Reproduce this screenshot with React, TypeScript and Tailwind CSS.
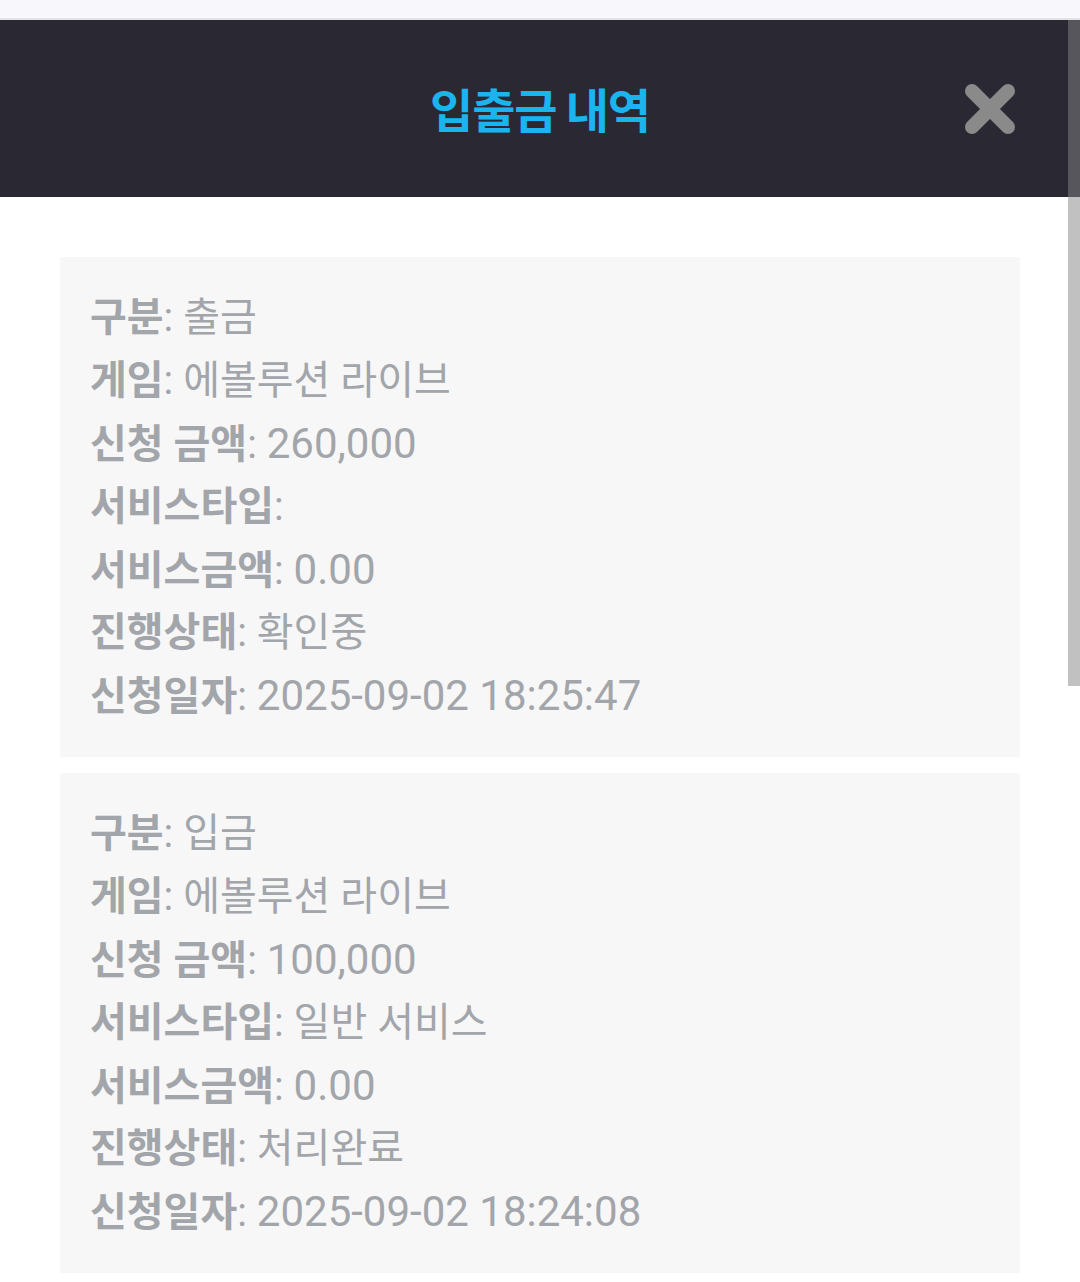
const records = [
  [
    ["구분", "출금"],
    ["게임", "에볼루션 라이브"],
    ["신청 금액", "260,000"],
    ["서비스타입", ""],
    ["서비스금액", "0.00"],
    ["진행상태", "확인중"],
    ["신청일자", "2025-09-02 18:25:47"],
  ],
  [
    ["구분", "입금"],
    ["게임", "에볼루션 라이브"],
    ["신청 금액", "100,000"],
    ["서비스타입", "일반 서비스"],
    ["서비스금액", "0.00"],
    ["진행상태", "처리완료"],
    ["신청일자", "2025-09-02 18:24:08"],
  ],
];

const isNumeric = (v: string) => /^[0-9.,:\- ]+$/.test(v);

const App = () => {
  return (
    <div
      className="relative h-[1282px] w-[1080px] overflow-hidden bg-white"
      style={{ fontFamily: 'Roboto, "Noto Sans CJK KR", sans-serif' }}
    >
      <div className="h-[20px] border-b-2 border-[#e2e2e8] bg-[#f8f8fc]" />
      <div className="grid h-[177px] grid-cols-[1fr_auto_1fr] items-center bg-[#2a2933]">
        <div />
        <h2
          className="text-[47px] font-bold tracking-tight text-[#1ab4ee]"
          style={{ fontFamily: '"Noto Sans CJK KR", sans-serif' }}
        >
          입출금 내역
        </h2>
        <div className="flex justify-end pr-[64px]">
          <button className="flex h-[52px] w-[52px] items-center justify-center">
            <svg width="52" height="52" viewBox="0 0 52 52">
              <path
                d="M8 8 L44 44 M44 8 L8 44"
                stroke="#8a8a8a"
                strokeWidth="14"
                strokeLinecap="round"
              />
            </svg>
          </button>
        </div>
      </div>

      <div className="flex flex-col gap-4 px-[60px] pt-[60px]">
        {records.map((rows, i) => (
          <div key={i} className="bg-[#f7f7f7] px-[30px] pb-[30px] pt-[29px]">
            {rows.map(([label, value]) => (
              <p
                key={label}
                className="h-[63px] overflow-hidden text-[40px] leading-[63px] text-[#a2a5aa]"
              >
                <span className="font-bold">{label}</span>:{" "}
                <span className={isNumeric(value) ? "text-[42px]" : ""}>
                  {value}
                </span>
              </p>
            ))}
          </div>
        ))}
      </div>

      <div className="absolute right-0 top-[20px] flex w-[12px] flex-col">
        <div className="h-[177px] bg-[#57565d]" />
        <div className="h-[489px] bg-[#c1c1c1]" />
      </div>
    </div>
  );
};

export default App;
